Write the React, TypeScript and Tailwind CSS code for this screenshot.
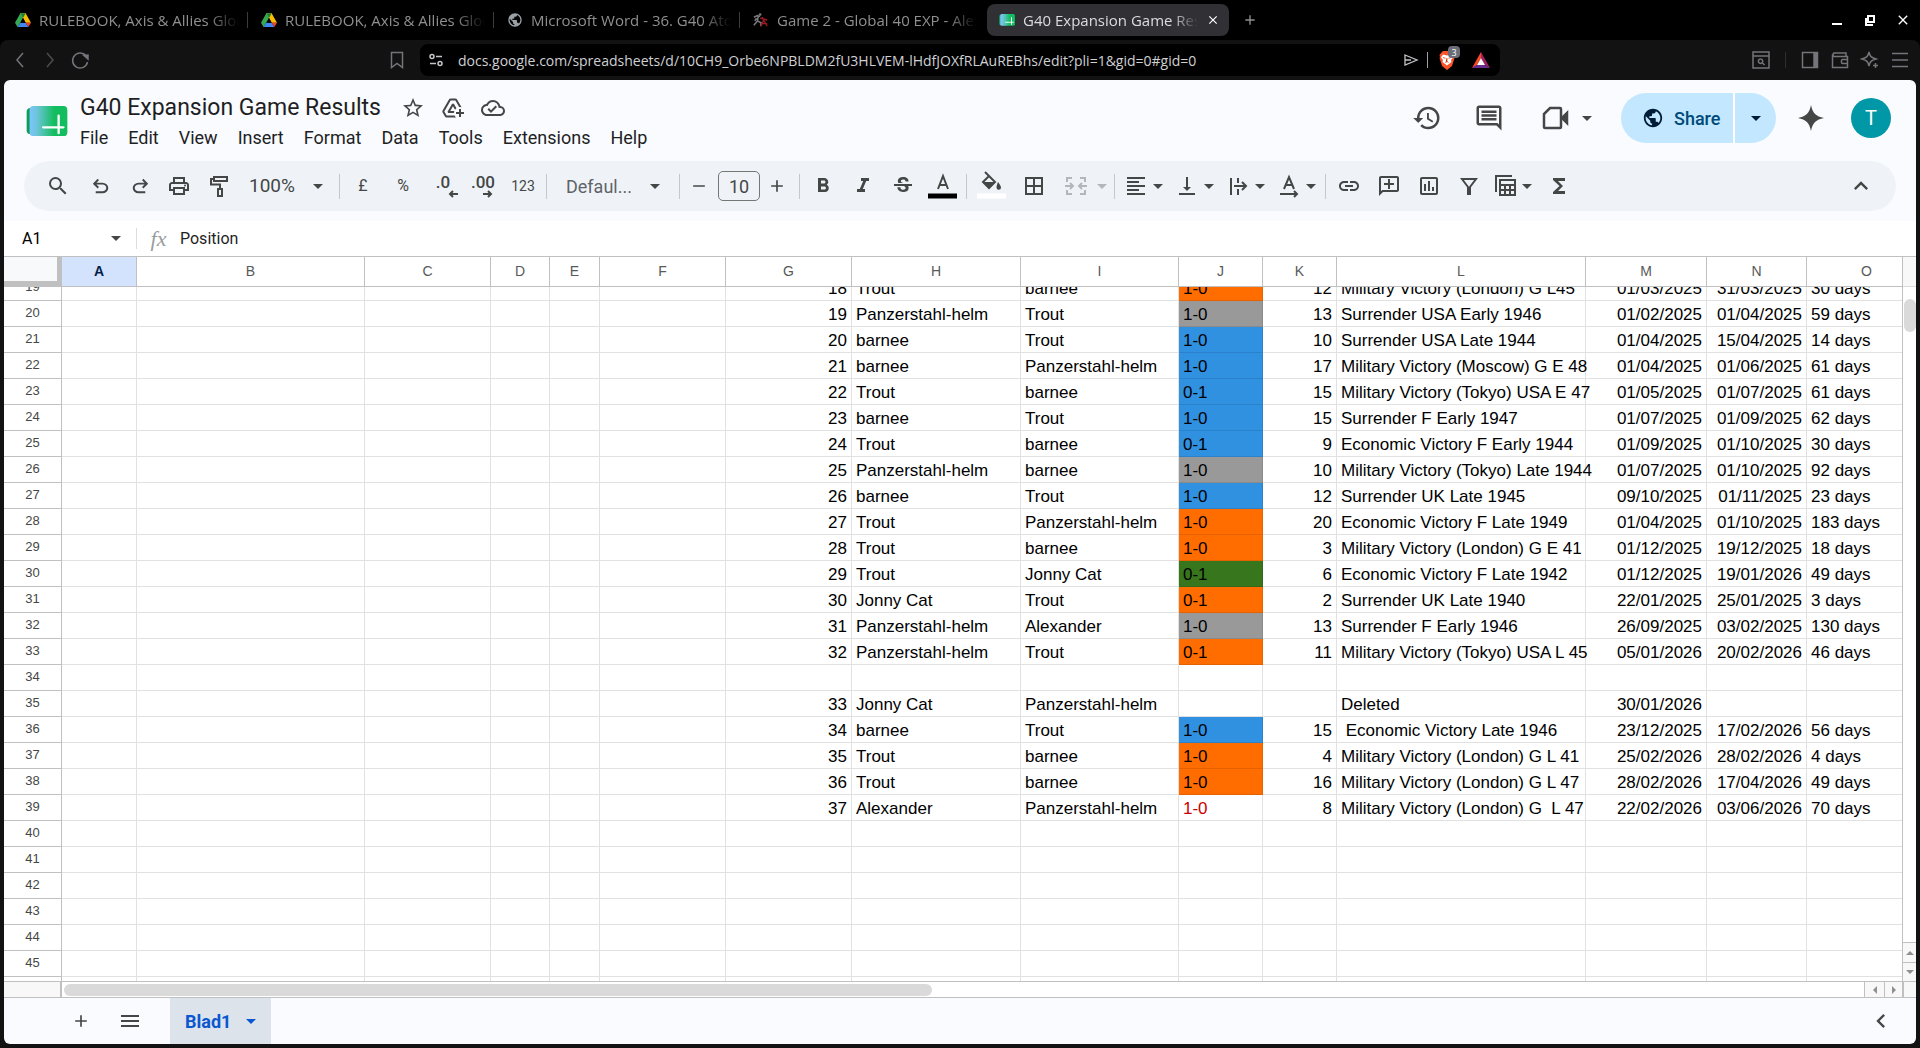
import type { ReactNode } from 'react';
import {
  MdSearch, MdOutlinePrint, MdStarOutline, MdAddToDrive, MdOutlineCloudDone, MdHistory,
  MdOutlineInsertComment, MdPublic, MdStrikethroughS, MdFormatBold, MdFormatItalic, MdBorderAll,
  MdFormatAlignLeft, MdVerticalAlignBottom, MdLink, MdOutlineAddComment, MdOutlineInsertChart,
  MdFunctions, MdKeyboardArrowUp, MdKeyboardArrowLeft, MdAdd, MdRemove, MdMenu, MdClose,
} from 'react-icons/md';

interface Row {
  n: number;
  g?: string;
  h?: string;
  i?: string;
  j?: string;
  tone?: Tone;
  k?: string;
  l?: string;
  m?: string;
  end?: string;
  o?: string;
}

type Tone = 'orange' | 'gray' | 'blue' | 'green' | 'red';

const TONES: Record<Tone, string> = {
  orange: 'bg-[#ff6d01] border-[#e66201]',
  gray: 'bg-[#999999] border-[#8a8a8a]',
  blue: 'bg-[#3191e1] border-[#2c82ca]',
  green: 'bg-[#38761d] border-[#326a1a]',
  red: 'text-[#cc0000] border-[#e1e1e1]',
};

const row = (n: number, g: string, h: string, i: string, j: string, tone: Tone | undefined, k: string, l: string, m: string, end: string, o: string): Row =>
  ({ n, g, h, i, j, tone, k, l, m, end, o });

const ROWS: Row[] = [
  row(19, '18', 'Trout', 'barnee', '1-0', 'orange', '12', 'Military Victory (London) G L45', '01/03/2025', '31/03/2025', '30 days'),
  row(20, '19', 'Panzerstahl-helm', 'Trout', '1-0', 'gray', '13', 'Surrender USA Early 1946', '01/02/2025', '01/04/2025', '59 days'),
  row(21, '20', 'barnee', 'Trout', '1-0', 'blue', '10', 'Surrender USA Late 1944', '01/04/2025', '15/04/2025', '14 days'),
  row(22, '21', 'barnee', 'Panzerstahl-helm', '1-0', 'blue', '17', 'Military Victory (Moscow) G E 48', '01/04/2025', '01/06/2025', '61 days'),
  row(23, '22', 'Trout', 'barnee', '0-1', 'blue', '15', 'Military Victory (Tokyo) USA E 47', '01/05/2025', '01/07/2025', '61 days'),
  row(24, '23', 'barnee', 'Trout', '1-0', 'blue', '15', 'Surrender F Early 1947', '01/07/2025', '01/09/2025', '62 days'),
  row(25, '24', 'Trout', 'barnee', '0-1', 'blue', '9', 'Economic Victory F Early 1944', '01/09/2025', '01/10/2025', '30 days'),
  row(26, '25', 'Panzerstahl-helm', 'barnee', '1-0', 'gray', '10', 'Military Victory (Tokyo) Late 1944', '01/07/2025', '01/10/2025', '92 days'),
  row(27, '26', 'barnee', 'Trout', '1-0', 'blue', '12', 'Surrender UK Late 1945', '09/10/2025', '01/11/2025', '23 days'),
  row(28, '27', 'Trout', 'Panzerstahl-helm', '1-0', 'orange', '20', 'Economic Victory F Late 1949', '01/04/2025', '01/10/2025', '183 days'),
  row(29, '28', 'Trout', 'barnee', '1-0', 'orange', '3', 'Military Victory (London) G E 41', '01/12/2025', '19/12/2025', '18 days'),
  row(30, '29', 'Trout', 'Jonny Cat', '0-1', 'green', '6', 'Economic Victory F Late 1942', '01/12/2025', '19/01/2026', '49 days'),
  row(31, '30', 'Jonny Cat', 'Trout', '0-1', 'orange', '2', 'Surrender UK Late 1940', '22/01/2025', '25/01/2025', '3 days'),
  row(32, '31', 'Panzerstahl-helm', 'Alexander', '1-0', 'gray', '13', 'Surrender F Early 1946', '26/09/2025', '03/02/2025', '130 days'),
  row(33, '32', 'Panzerstahl-helm', 'Trout', '0-1', 'orange', '11', 'Military Victory (Tokyo) USA L 45', '05/01/2026', '20/02/2026', '46 days'),
  { n: 34 },
  row(35, '33', 'Jonny Cat', 'Panzerstahl-helm', '', undefined, '', 'Deleted', '30/01/2026', '', ''),
  row(36, '34', 'barnee', 'Trout', '1-0', 'blue', '15', ' Economic Victory Late 1946', '23/12/2025', '17/02/2026', '56 days'),
  row(37, '35', 'Trout', 'barnee', '1-0', 'orange', '4', 'Military Victory (London) G L 41', '25/02/2026', '28/02/2026', '4 days'),
  row(38, '36', 'Trout', 'barnee', '1-0', 'orange', '16', 'Military Victory (London) G L 47', '28/02/2026', '17/04/2026', '49 days'),
  row(39, '37', 'Alexander', 'Panzerstahl-helm', '1-0', 'red', '8', 'Military Victory (London) G  L 47', '22/02/2026', '03/06/2026', '70 days'),
  { n: 40 }, { n: 41 }, { n: 42 }, { n: 43 }, { n: 44 }, { n: 45 },
];

const COLUMNS = [
  { name: 'A', width: 75 }, { name: 'B', width: 228 }, { name: 'C', width: 126 },
  { name: 'D', width: 59 }, { name: 'E', width: 50 }, { name: 'F', width: 126 },
  { name: 'G', width: 126 }, { name: 'H', width: 169 }, { name: 'I', width: 158 },
  { name: 'J', width: 84 }, { name: 'K', width: 74 }, { name: 'L', width: 249 },
  { name: 'M', width: 121 }, { name: 'N', width: 100 }, { name: 'O', width: 120 },
];
const TABLE_WIDTH = 58 + COLUMNS.reduce((sum, c) => sum + c.width, 0);

function Caret({ className = 'text-[#444746]' }: { className?: string }) {
  return (
    <svg width="10" height="5" viewBox="0 0 10 5" className={`shrink-0 ${className}`} aria-hidden="true">
      <path d="M0 0h10L5 5z" fill="currentColor" />
    </svg>
  );
}

function SheetsLogo({ className }: { className: string }) {
  return (
    <svg viewBox="0 0 42 32" className={className} aria-hidden="true">
      <defs>
        <linearGradient id="sheet" x1="0" x2="1" y1="0" y2="0">
          <stop offset="0" stopColor="#7cc4ff" />
          <stop offset="0.2" stopColor="#6cc5d8" />
          <stop offset="0.65" stopColor="#12bd5f" />
          <stop offset="1" stopColor="#12bd5f" />
        </linearGradient>
      </defs>
      <rect x="0" y="2" width="14" height="27" rx="4" fill="#0a9d58" />
      <rect x="3" y="0" width="39" height="31" rx="4" fill="url(#sheet)" />
      <path d="M33 10v18M17 22h21" stroke="#fff" strokeWidth="2.4" strokeLinecap="round" />
    </svg>
  );
}

function DriveIcon() {
  return (
    <svg viewBox="0 0 24 22" className="h-4 w-4 shrink-0" aria-hidden="true">
      <path d="M8 1h8l-4 7-4 7-4 7L0 15z" fill="#34a853" />
      <path d="M8 1h8l8 14h-8z" fill="#fbbc04" />
      <path d="M8 1h8l-4 7z" fill="#188038" />
      <path d="M4 21.500 8 15h8l4 6.500z" fill="#4285f4" />
      <path d="M16 15h8l-4 6.500z" fill="#ea4335" />
      <path d="M12 8l4 7H8z" fill="#000" />
    </svg>
  );
}

function SoldierIcon() {
  return (
    <svg viewBox="0 0 18 16" className="h-4 w-4 shrink-0" fill="none" aria-hidden="true">
      <path d="M1 5l4-2 3 1M6 3l-1 6-4 5M5 9l4 2 0 4M2 9l2-3" stroke="#77797c" strokeWidth="1.800" />
      <circle cx="8" cy="1.800" r="1.500" fill="#77797c" />
      <path d="M8 6l8 2M10 5l2 2M12 8l-3 7M12 8l4 7M9 12h7" stroke="#9b1c22" strokeWidth="1.500" />
    </svg>
  );
}

const TABS = [
  { title: 'RULEBOOK, Axis & Allies Glob', icon: <DriveIcon /> },
  { title: 'RULEBOOK, Axis & Allies Glob', icon: <DriveIcon /> },
  { title: 'Microsoft Word - 36. G40 Ato', icon: <MdPublic className="h-4 w-4 shrink-0 text-[#9aa0a6]" /> },
  { title: 'Game 2 - Global 40 EXP - Alex', icon: <SoldierIcon /> },
];

function TabStrip() {
  return (
    <div className="flex h-10 items-center bg-black pl-[15px] text-[15px] text-[#8f8f8f]">
      {TABS.map((tab, idx) => (
        <button key={idx} className="flex w-[246px] items-center gap-2">
          {tab.icon}
          <span className="w-[200px] whitespace-nowrap text-left [mask-image:linear-gradient(to_right,black_85%,transparent)]">{tab.title}</span>
          {idx < 3 && <span className="h-4 w-px bg-[#3c3c3c]" />}
        </button>
      ))}
      <div className="-ml-3 flex h-8 w-[242px] items-center gap-2 rounded-lg bg-[#303035] pl-3 text-[#dcdce0]">
        <SheetsLogo className="h-3 w-4 shrink-0" />
        <span className="w-[175px] whitespace-nowrap text-left [mask-image:linear-gradient(to_right,black_85%,transparent)]">G40 Expansion Game Res</span>
        <button aria-label="Close tab"><MdClose className="h-[14px] w-[14px] text-white" /></button>
      </div>
      <button aria-label="New tab" className="ml-[13px]"><MdAdd className="h-4 w-4" /></button>
      <div className="ml-auto flex items-center gap-[17px] pr-[9px] text-white">
        <button aria-label="Minimise">
          <svg width="16" height="16" viewBox="0 0 16 16"><path d="M3 12h10" stroke="currentColor" strokeWidth="2" /></svg>
        </button>
        <button aria-label="Restore">
          <svg width="16" height="16" viewBox="0 0 16 16" fill="none" stroke="currentColor" strokeWidth="2"><path d="M6 4h6v6H6zM4 6v7h7" /></svg>
        </button>
        <button aria-label="Close"><MdClose className="h-4 w-4" /></button>
      </div>
    </div>
  );
}

function AddressBar() {
  return (
    <div className="flex h-10 items-center rounded-t-lg bg-[#121213] text-[#74747a]">
      <div className="flex w-[420px] items-center gap-[10px] pl-[10px]">
        <button aria-label="Back"><Stroke d="M13 3l-6 7 6 7" /></button>
        <button aria-label="Forward" className="opacity-60"><Stroke d="M7 3l6 7-6 7" /></button>
        <button aria-label="Reload">
          <svg width="20" height="20" viewBox="0 0 20 20" fill="none" stroke="currentColor" strokeWidth="1.500">
            <path d="M17 7.500A7.500 7.500 0 1 0 17.500 12" /><path d="M14 5.500l4-.5v4z" fill="currentColor" />
          </svg>
        </button>
        <button aria-label="Bookmark" className="ml-auto mr-[13px]"><Stroke d="M4.500 2.500h11v15l-5.500-4-5.500 4z" /></button>
      </div>
      <div className="flex h-8 w-[1080px] items-center rounded-lg bg-black pl-2 pr-[10px]">
        <svg width="16" height="16" viewBox="0 0 16 16" fill="none" stroke="#c4c4c8" strokeWidth="1.500" aria-hidden="true">
          <circle cx="4" cy="4.500" r="2" /><path d="M8 4.500h6M2 11.500h6" /><circle cx="12" cy="11.500" r="2" />
        </svg>
        <input aria-label="Address" readOnly className="ml-[14px] min-w-0 flex-1 text-[14px] text-[#cfd0d4] outline-none" value="docs.google.com/spreadsheets/d/10CH9_Orbe6NPBLDM2fU3HLVEM-lHdfJOXfRLAuREBhs/edit?pli=1&gid=0#gid=0" />
        <svg width="16" height="16" viewBox="0 0 16 16" fill="none" stroke="#c4c4c8" strokeWidth="1.300" aria-hidden="true">
          <path d="M2 3l12 5-12 5zM2 8h6" />
        </svg>
        <span className="ml-2 h-4 w-px bg-[#a0a0a4]" />
        <button aria-label="Shields" className="relative ml-[10px]">
          <svg width="18" height="20" viewBox="0 0 18 20" aria-hidden="true">
            <path d="M5 1h8l2 2 1.500 2-.5 2 .5 1-2.500 8-5 4-5-4L1.500 8 2 7l-.5-2L3 3z" fill="#fb542b" />
            <path d="M5 4.500l4 1 4-1 2 3-2 2.500.5 2L9 15.500 4.500 12l.5-2L3 7.500z" fill="#fff" />
            <path d="M5 7.500l2.500.8M13 7.500l-2.500.8M9 8v3.500l-1.500 1M9 11.500l1.500 1" stroke="#fb542b" />
          </svg>
          <span className="absolute -top-1 left-[10px] flex h-3 w-3 items-center justify-center rounded-sm bg-[#6b6d78] text-[9px] leading-none text-white">3</span>
        </button>
        <button aria-label="Rewards" className="ml-4">
          <svg width="18" height="16" viewBox="0 0 18 16" aria-hidden="true">
            <path d="M9 0v6l-4 7-5 3z" fill="#ff4724" /><path d="M9 0l9 16-5-3-4-7z" fill="#9e1f63" />
            <path d="M0 16l5-3h8l5 3z" fill="#662d91" /><path d="M9 6l4 7H5z" fill="#fff" />
          </svg>
        </button>
      </div>
      <div className="ml-auto flex items-center gap-[10px] pr-[10px]">
        <button aria-label="Find"><Stroke d="M2 2h16v16H2zM2 6h16M9.500 9a2.200 2.200 0 1 0 .1 0M11.500 13l2 2" /></button>
        <span className="mx-1 h-4 w-px bg-[#2d2d30]" />
        <button aria-label="Sidebar">
          <svg width="20" height="20" viewBox="0 0 20 20" fill="none" stroke="currentColor" strokeWidth="1.500"><path d="M2.500 2.500h15v15h-15z" /><path d="M15.500 2v16" strokeWidth="4.500" /></svg>
        </button>
        <button aria-label="Wallet"><Stroke d="M16 6V3H4a2 2 0 0 0 0 3.500h13.500v11H2.500V4.500M17.500 9.500h-5a1 1 0 0 0-1 1v2a1 1 0 0 0 1 1h5" /></button>
        <button aria-label="Assistant"><Stroke d="M9 2c.8 4.500 2 5.500 7 7-5 1.500-6 2.500-7 7-1-4.500-2-5.500-7-7 5-1.500 6-2.500 7-7zM15.500 13v5M13 15.500h5" /></button>
        <button aria-label="Menu"><Stroke d="M2 3.500h16M2 10h16M2 16.500h16" /></button>
      </div>
    </div>
  );
}

function Stroke({ d }: { d: string }) {
  return (
    <svg width="20" height="20" viewBox="0 0 20 20" fill="none" stroke="currentColor" strokeWidth="1.500" aria-hidden="true">
      <path d={d} />
    </svg>
  );
}

function DocHeader() {
  return (
    <header className="flex h-[81px] pl-[22px] pr-[22px]">
      <SheetsLogo className="mt-[26px] h-[31px] w-[42px]" />
      <div className="ml-3 pt-[11px]">
        <div className="flex h-[34px] items-center text-[#444746]">
          <h1 className="text-[23px] text-[#1f1f1f]">G40 Expansion Game Results</h1>
          <div className="ml-5 flex gap-4">
            <button aria-label="Star"><MdStarOutline className="h-6 w-6" /></button>
            <button aria-label="Move"><MdAddToDrive className="h-6 w-6" /></button>
            <button aria-label="Saved to Drive"><MdOutlineCloudDone className="h-6 w-6" /></button>
          </div>
        </div>
        <nav className="flex h-6 items-center gap-5 text-[18px] text-[#1f1f1f]">
          {['File', 'Edit', 'View', 'Insert', 'Format', 'Data', 'Tools', 'Extensions', 'Help'].map(name => (
            <button key={name}>{name}</button>
          ))}
        </nav>
      </div>
      <div className="ml-auto mt-[13px] flex h-[50px] items-center text-[#444746]">
        <button aria-label="Version history"><MdHistory className="h-[30px] w-[30px]" /></button>
        <button aria-label="Comments" className="ml-8"><MdOutlineInsertComment className="h-[30px] w-[30px]" /></button>
        <button aria-label="Meet" className="ml-9 flex items-center gap-3">
          <svg width="30" height="30" viewBox="0 0 30 30" fill="none" stroke="currentColor" strokeWidth="2.500" aria-hidden="true">
            <path d="M10 5h10a1 1 0 0 1 1 1v18a1 1 0 0 1-1 1H5a1 1 0 0 1-1-1V11z" /><path d="M22 15l5-5v10z" fill="currentColor" />
          </svg>
          <Caret />
        </button>
        <div className="ml-[29px] flex h-[50px] overflow-hidden rounded-full bg-[#c2e7ff] text-[#004a77]">
          <button className="flex w-[114px] items-center gap-[10px] border-r-2 border-white pl-[21px] text-[18px] font-medium">
            <MdPublic className="h-[22px] w-[22px] text-[#001d35]" />Share
          </button>
          <button aria-label="Share options" className="flex w-[41px] items-center justify-center"><Caret className="text-[#001d35]" /></button>
        </div>
        <button aria-label="Gemini" className="ml-[22px]">
          <svg width="26" height="26" viewBox="0 0 26 26" aria-hidden="true"><path d="M13 0c1.500 8 5 11.500 13 13-8 1.500-11.500 5-13 13C11.500 18 8 14.500 0 13 8 11.500 11.500 8 13 0z" fill="currentColor" /></svg>
        </button>
        <button aria-label="Account" className="ml-[27px] mr-[3px] h-10 w-10 rounded-full bg-[#0097a7] text-[20px] text-white">T</button>
      </div>
    </header>
  );
}

function Tool({ label, children, className = 'w-10' }: { label: string; children: ReactNode; className?: string }) {
  return <button aria-label={label} className={`flex h-10 shrink-0 items-center justify-center ${className}`}>{children}</button>;
}

function MenuTool({ label, children }: { label: string; children: ReactNode }) {
  return (
    <button aria-label={label} className="flex h-10 w-[51px] shrink-0 items-center gap-[5px] pl-[6px]">
      {children}
      <Caret />
    </button>
  );
}

function Icon({ children }: { children: ReactNode }) {
  return <svg width="24" height="24" viewBox="0 0 24 24" fill="none" stroke="currentColor" strokeWidth="2" aria-hidden="true">{children}</svg>;
}

function Divider() {
  return <span className="mx-[3px] h-[25px] w-px shrink-0 bg-[#c7c7c7]" />;
}

function Toolbar() {
  return (
    <div className="mx-5 mb-[10px] flex h-[50px] items-center rounded-full bg-[#eff3f8] pl-[13px] pr-[21px] text-[#444746]">
      <Tool label="Search menus" className="w-[42px]"><MdSearch className="h-6 w-6" /></Tool>
      <Tool label="Undo" className="w-[42px]">
        <svg width="23" height="23" viewBox="0 -960 960 960" fill="currentColor"><path d="M280-200v-80h284q63 0 109.500-40T720-420q0-60-46.500-100T564-560H312l104 104-56 56-200-200 200-200 56 56-104 104h252q97 0 169 63t72 157q0 94-72 157t-169 63H280Z" /></svg>
      </Tool>
      <Tool label="Redo" className="w-[38px]">
        <svg width="23" height="23" viewBox="0 -960 960 960" fill="currentColor"><path d="M396-200q-97 0-169-63t-72-157q0-94 72-157t169-63h252L544-744l56-56 200 200-200 200-56-56 104-104H396q-63 0-109.500 40T240-420q0 60 46.500 100T396-280h284v80H396Z" /></svg>
      </Tool>
      <Tool label="Print"><MdOutlinePrint className="h-6 w-6" /></Tool>
      <Tool label="Paint format"><Icon><path d="M7 3h13v4H7zM7 5H4v5.500h9V15M11 15h4v7h-4z" /></Icon></Tool>
      <button className="flex w-[97px] items-center justify-between pl-[10px] pr-[13px] text-[19px]">100%<Caret /></button>
      <Divider />
      <Tool label="Format as currency"><span className="text-[16px]">£</span></Tool>
      <Tool label="Format as percent"><span className="text-[16px]">%</span></Tool>
      <Tool label="Decrease decimal places">
        <span className="relative mb-2 text-[17px] font-medium leading-6">.0<svg width="10" height="8" viewBox="0 0 10 8" className="absolute -bottom-1 left-3" fill="none" stroke="currentColor" strokeWidth="2"><path d="M10 4H2M5 1L2 4l3 3" /></svg></span>
      </Tool>
      <Tool label="Increase decimal places">
        <span className="relative mb-2 text-[17px] font-medium leading-6">.00<svg width="10" height="8" viewBox="0 0 10 8" className="absolute -bottom-1 left-3" fill="none" stroke="currentColor" strokeWidth="2"><path d="M0 4h8M5 1l3 3-3 3" /></svg></span>
      </Tool>
      <Tool label="More formats"><span className="text-[14px]">123</span></Tool>
      <Divider />
      <button className="flex w-[126px] items-center justify-between pl-4 pr-4 text-[18px] text-[#5f6368]">Defaul...<Caret /></button>
      <Divider />
      <Tool label="Decrease font size" className="w-8"><MdRemove className="h-5 w-5" /></Tool>
      <input aria-label="Font size" defaultValue="10" className="mx-[3px] h-[30px] w-[42px] rounded-[5px] border border-[#747775] text-center text-[18px]" />
      <Tool label="Increase font size" className="mr-[5px] w-7"><MdAdd className="h-5 w-5" /></Tool>
      <Divider />
      <Tool label="Bold"><MdFormatBold className="h-6 w-6" /></Tool>
      <Tool label="Italic"><MdFormatItalic className="h-6 w-6" /></Tool>
      <Tool label="Strikethrough"><MdStrikethroughS className="h-6 w-6" /></Tool>
      <Tool label="Text colour">
        <svg width="30" height="30" viewBox="0 0 30 30" fill="none"><path d="M10 18l5-13 5 13M12 14h6" stroke="#444746" strokeWidth="2" /><path d="M0 25h29" stroke="#000" strokeWidth="5" /></svg>
      </Tool>
      <Divider />
      <Tool label="Fill colour" className="w-11">
        <svg width="30" height="34" viewBox="0 0 30 34"><path d="M8 3l10 10-6 6-6-6 6-6" fill="none" stroke="#444746" strokeWidth="2" /><path d="M6 13h12l-6 6zM21 13s3 3.500 3 5.500a2.200 2.200 0 0 1-4.500 0c0-2 1.500-5.500 1.500-5.500z" fill="#444746" /><path d="M0 27h29" stroke="#fff" strokeWidth="5" /></svg>
      </Tool>
      <Tool label="Borders"><MdBorderAll className="h-6 w-6" /></Tool>
      <button aria-label="Merge cells" disabled className="flex h-10 w-[57px] shrink-0 items-center gap-[9px] pl-[10px] text-[#b4b7ba]">
        <Icon><path d="M8 4H3v4M3 16v4h5M16 4h5v4M21 16v4h-5M1 12h8M6 9l3 3-3 3M23 12h-8M18 9l-3 3 3 3" /></Icon>
        <Caret className="text-[#b4b7ba]" />
      </button>
      <Divider />
      <MenuTool label="Horizontal align"><MdFormatAlignLeft className="h-6 w-6" /></MenuTool>
      <MenuTool label="Vertical align"><MdVerticalAlignBottom className="h-6 w-6" /></MenuTool>
      <MenuTool label="Text wrapping"><Icon><path d="M5 4v17M12 4v5M12 15v6M8 12h11M16 8l4 4-4 4" /></Icon></MenuTool>
      <MenuTool label="Text rotation"><Icon><path d="M7 15l5-12 5 12M9 11h6M3 20h16M17 17l3 3-3 3" /></Icon></MenuTool>
      <Divider />
      <Tool label="Insert link"><MdLink className="h-6 w-6" /></Tool>
      <Tool label="Insert comment"><MdOutlineAddComment className="h-6 w-6 -scale-x-100" /></Tool>
      <Tool label="Insert chart"><MdOutlineInsertChart className="h-6 w-6" /></Tool>
      <Tool label="Create a filter"><Icon><path d="M5 5h14l-6 8v7h-2v-7z" /></Icon></Tool>
      <button aria-label="Table views" className="flex h-10 w-[50px] shrink-0 items-center gap-[5px] pl-1">
        <Icon><path d="M3 18V2h16M7 6h15v15H7zM7 11h15M7 16h15M12 11v10M17 11v10" /></Icon>
        <Caret />
      </button>
      <Tool label="Functions"><MdFunctions className="h-6 w-6" /></Tool>
      <button aria-label="Hide the menus" className="ml-auto"><MdKeyboardArrowUp className="h-7 w-7" /></button>
    </div>
  );
}

function FormulaBar() {
  return (
    <div className="flex h-9 shrink-0 items-center border-b border-[#c0c0c0] bg-white text-[16px] text-black">
      <input aria-label="Name box" defaultValue="A1" className="w-[88px] pl-[18px] outline-none" />
      <button aria-label="Named ranges" className="ml-[19px]"><Caret /></button>
      <span className="ml-[15px] h-[21px] w-px bg-[#dadce0]" />
      <span className="w-[43px] text-center font-['Liberation_Serif',serif] text-[22px] italic text-[#9a9c9e]">fx</span>
      <input aria-label="Formula" defaultValue="Position" className="flex-1 text-[#1f1f1f] outline-none" />
    </div>
  );
}

const CELL = 'border-b border-r px-1 whitespace-pre';

function SheetRow({ data }: { data: Row }) {
  // the topmost visible row is partly scrolled away
  const clipped = data.n === 19;
  const cell = (text = '', leading = 'leading-[22px]') => (
    <div className={`flex flex-col justify-end ${clipped ? 'h-[13px] overflow-hidden' : 'h-[25px]'}`}>
      <span className={leading}>{text}</span>
    </div>
  );
  return (
    <tr className={clipped ? 'h-[14px]' : 'h-[26px]'}>
      <th scope="row" className="border-b border-r border-[#c0c0c0] bg-white p-0 text-[13px] font-normal text-[#444746]">
        {cell(String(data.n), 'leading-[26px]')}
      </th>
      {['A', 'B', 'C', 'D', 'E', 'F'].map(c => <td key={c} className="border-b border-r border-[#e1e1e1]" />)}
      <td className={`${CELL} border-[#e1e1e1] text-right`}>{cell(data.g)}</td>
      <td className={`${CELL} border-[#e1e1e1]`}>{cell(data.h)}</td>
      <td className={`${CELL} border-[#e1e1e1]`}>{cell(data.i)}</td>
      <td className={`${CELL} ${data.tone ? TONES[data.tone] : 'border-[#e1e1e1]'}`}>{cell(data.j)}</td>
      <td className={`${CELL} border-[#e1e1e1] text-right`}>{cell(data.k)}</td>
      <td className={`${CELL} border-[#e1e1e1]`}>{cell(data.l)}</td>
      <td className={`${CELL} border-[#e1e1e1] text-right`}>{cell(data.m)}</td>
      <td className={`${CELL} border-[#e1e1e1] text-right`}>{cell(data.end)}</td>
      <td className={`${CELL} border-[#e1e1e1]`}>{cell(data.o)}</td>
    </tr>
  );
}

function Grid() {
  return (
    <div className="min-w-0 flex-1 overflow-hidden">
      <table className="table-fixed border-separate border-spacing-0 font-['Liberation_Sans',Arial,sans-serif] text-[17px] text-black" style={{ width: TABLE_WIDTH }}>
        <colgroup>
          <col className="w-[58px]" />
          {COLUMNS.map(c => <col key={c.name} style={{ width: c.width }} />)}
        </colgroup>
        <thead>
          <tr className="h-[30px] text-[14px] text-[#575a5a]">
            <td className="border-b-[6px] border-r-[5px] border-[#c0c0c0] bg-[#f8f9fa]" />
            {COLUMNS.map(c => (
              <th key={c.name} scope="col" className={`border-b border-r border-[#c0c0c0] p-0 ${c.name === 'A' ? 'bg-[#d3e3fd] font-bold text-[#041e49]' : 'font-normal'}`}>
                {c.name}
              </th>
            ))}
          </tr>
        </thead>
        <tbody>
          {ROWS.map(r => <SheetRow key={r.n} data={r} />)}
          <tr className="h-[26px]">
            <td className="border-r border-[#c0c0c0]" />
            {COLUMNS.map(c => <td key={c.name} className="border-r border-[#e1e1e1]" />)}
          </tr>
        </tbody>
      </table>
    </div>
  );
}

function Arrow({ d }: { d: string }) {
  return <svg width="8" height="8" viewBox="0 0 8 8" aria-hidden="true"><path d={d} fill="#8f8f8f" /></svg>;
}

function Scrollbars() {
  return (
    <div className="flex h-[17px] shrink-0 border-y border-[#c0c0c0] bg-white">
      <div className="w-[58px] border-r-2 border-[#c0c0c0] bg-[#f8f8f8]" />
      <div className="flex flex-1 items-center pl-[2px]">
        <div className="h-3 w-[868px] rounded-full bg-[#dadada]" />
      </div>
      <button aria-label="Scroll left" className="flex w-5 items-center justify-center border-l border-[#c0c0c0] bg-[#f8f8f8]"><Arrow d="M6 0v8L2 4z" /></button>
      <button aria-label="Scroll right" className="flex w-[18px] items-center justify-center border-l border-[#c0c0c0] bg-[#f8f8f8]"><Arrow d="M2 0v8l4-4z" /></button>
      <div className="w-[14px] border-l-2 border-[#c0c0c0] bg-[#f8f8f8]" />
    </div>
  );
}

function SheetTabs() {
  return (
    <footer className="flex h-[46px] shrink-0 items-center text-[#444746]">
      <button aria-label="Add sheet" className="ml-[67px]"><MdAdd className="h-5 w-5" /></button>
      <button aria-label="All sheets" className="ml-[27px]"><MdMenu className="h-6 w-6" /></button>
      <button className="ml-7 flex h-[46px] w-[101px] items-center justify-between bg-[#dce3eb] px-[15px] text-[18px] font-bold text-[#0b57d0]">
        Blad1<Caret className="text-[#0b57d0]" />
      </button>
      <button aria-label="Show side panel" className="ml-auto mr-[21px]"><MdKeyboardArrowLeft className="h-7 w-7" /></button>
    </footer>
  );
}

export default function App() {
  return (
    <div className="flex h-screen flex-col overflow-hidden bg-black font-['Open_Sans','Noto_Sans',sans-serif]">
      <TabStrip />
      <AddressBar />
      <div className="flex min-h-0 flex-1 bg-[#121213] px-1 pb-1">
        <main className="flex min-w-0 flex-1 flex-col overflow-hidden rounded-md bg-[#f9fbff] font-[Roboto,sans-serif]">
          <DocHeader />
          <Toolbar />
          <FormulaBar />
          <div className="flex min-h-0 flex-1 bg-white">
            <Grid />
            <div className="flex w-[14px] flex-col border-l border-[#c0c0c0]">
              <div className="h-[30px] border-b border-[#dadada] bg-[#f8f8f8]" />
              <div className="ml-px mt-3 h-[33px] rounded-full bg-[#dadada]" />
              <button aria-label="Scroll up" className="mt-auto flex h-5 items-center justify-center border-t border-[#c0c0c0] bg-[#f8f8f8]"><Arrow d="M0 6h8L4 2z" /></button>
              <button aria-label="Scroll down" className="flex h-[19px] items-center justify-center border-t border-[#c0c0c0] bg-[#f8f8f8]"><Arrow d="M0 2h8L4 6z" /></button>
            </div>
          </div>
          <Scrollbars />
          <SheetTabs />
        </main>
      </div>
    </div>
  );
}
